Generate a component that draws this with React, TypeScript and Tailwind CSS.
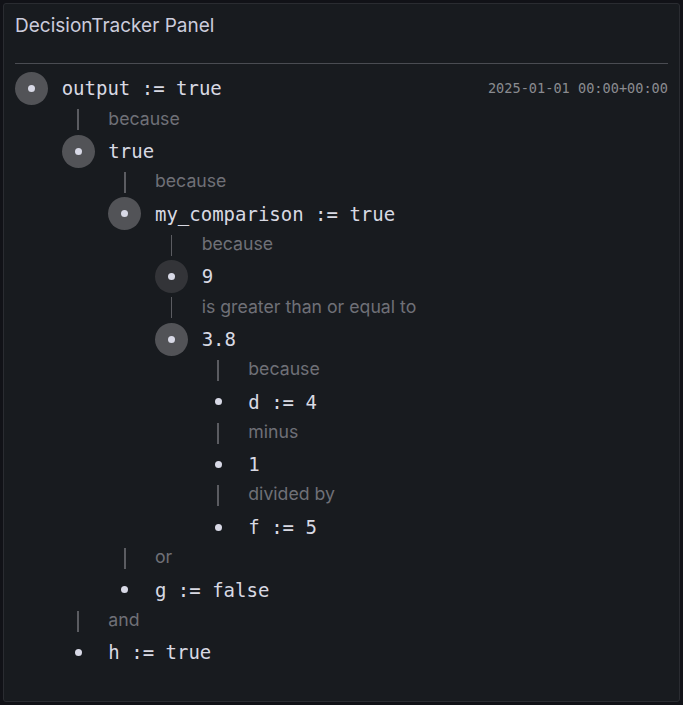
import type { FC } from 'react'

type Variant = 'light' | 'dark' | 'leaf'

interface TreeNode {
  label: string
  variant: Variant
  children?: { via: string; node: TreeNode }[]
}

const tree: TreeNode = {
  label: 'output := true',
  variant: 'light',
  children: [
    {
      via: 'because',
      node: {
        label: 'true',
        variant: 'light',
        children: [
          {
            via: 'because',
            node: {
              label: 'my_comparison := true',
              variant: 'light',
              children: [
                { via: 'because', node: { label: '9', variant: 'dark' } },
                {
                  via: 'is greater than or equal to',
                  node: {
                    label: '3.8',
                    variant: 'light',
                    children: [
                      { via: 'because', node: { label: 'd := 4', variant: 'leaf' } },
                      { via: 'minus', node: { label: '1', variant: 'leaf' } },
                      { via: 'divided by', node: { label: 'f := 5', variant: 'leaf' } }
                    ]
                  }
                }
              ]
            }
          },
          { via: 'or', node: { label: 'g := false', variant: 'leaf' } }
        ]
      }
    },
    { via: 'and', node: { label: 'h := true', variant: 'leaf' } }
  ]
}

const Marker: FC<{ variant: Variant }> = ({ variant }) => (
  <div className="w-[33px] h-[33px] shrink-0 flex items-center justify-center">
    <div
      className={`w-[33px] h-[33px] rounded-full flex items-center justify-center ${
        variant === 'light' ? 'bg-[#525357]' : variant === 'dark' ? 'bg-[#333438]' : ''
      }`}
    >
      <div className="w-[7px] h-[7px] rounded-full bg-[#d8d9e6]" />
    </div>
  </div>
)

const Node: FC<{ node: TreeNode; time?: string }> = ({ node, time }) => (
  <div>
    <div className="flex items-center h-[33px]">
      <Marker variant={node.variant} />
      <span className="ml-[13.67px] text-[19px] text-[#d8d9e3] whitespace-pre font-['DejaVu_Sans_Mono',monospace]">
        {node.label}
      </span>
      {time && (
        <span className="ml-auto text-[13.6px] text-[#8a8b90] font-['DejaVu_Sans_Mono',monospace]">
          {time}
        </span>
      )}
    </div>
    {node.children && (
      <div className="pl-[46.67px]">
        {node.children.map((c, i) => (
          <div key={i}>
            <div className="flex items-center h-[29.67px]">
              <div className="w-[33px] shrink-0 flex justify-center">
                <div className="w-[1.5px] h-[21px] bg-[#5b5c61]" />
              </div>
              <span className="ml-[13.67px] -mt-[2px] text-[17.7px] text-[#6f7077] font-['Inter',sans-serif]">
                {c.via}
              </span>
            </div>
            <Node node={c.node} />
          </div>
        ))}
      </div>
    )}
  </div>
)

export default function App() {
  return (
    <div className="w-[683px] h-[705px] bg-[#111217] p-[3px] font-['Inter',sans-serif]">
      <div className="h-full rounded-[3px] border border-[#2a2c31] bg-[#181b1f] px-[11px]">
        <div className="h-[60px] border-b border-[#4a4c52] pt-[9px]">
          <h1 className="text-[19px] leading-[26px] font-normal text-[#ccccdc]">DecisionTracker Panel</h1>
        </div>
        <div className="pt-[8px]">
          <Node node={tree} time="2025-01-01 00:00+00:00" />
        </div>
      </div>
    </div>
  )
}
